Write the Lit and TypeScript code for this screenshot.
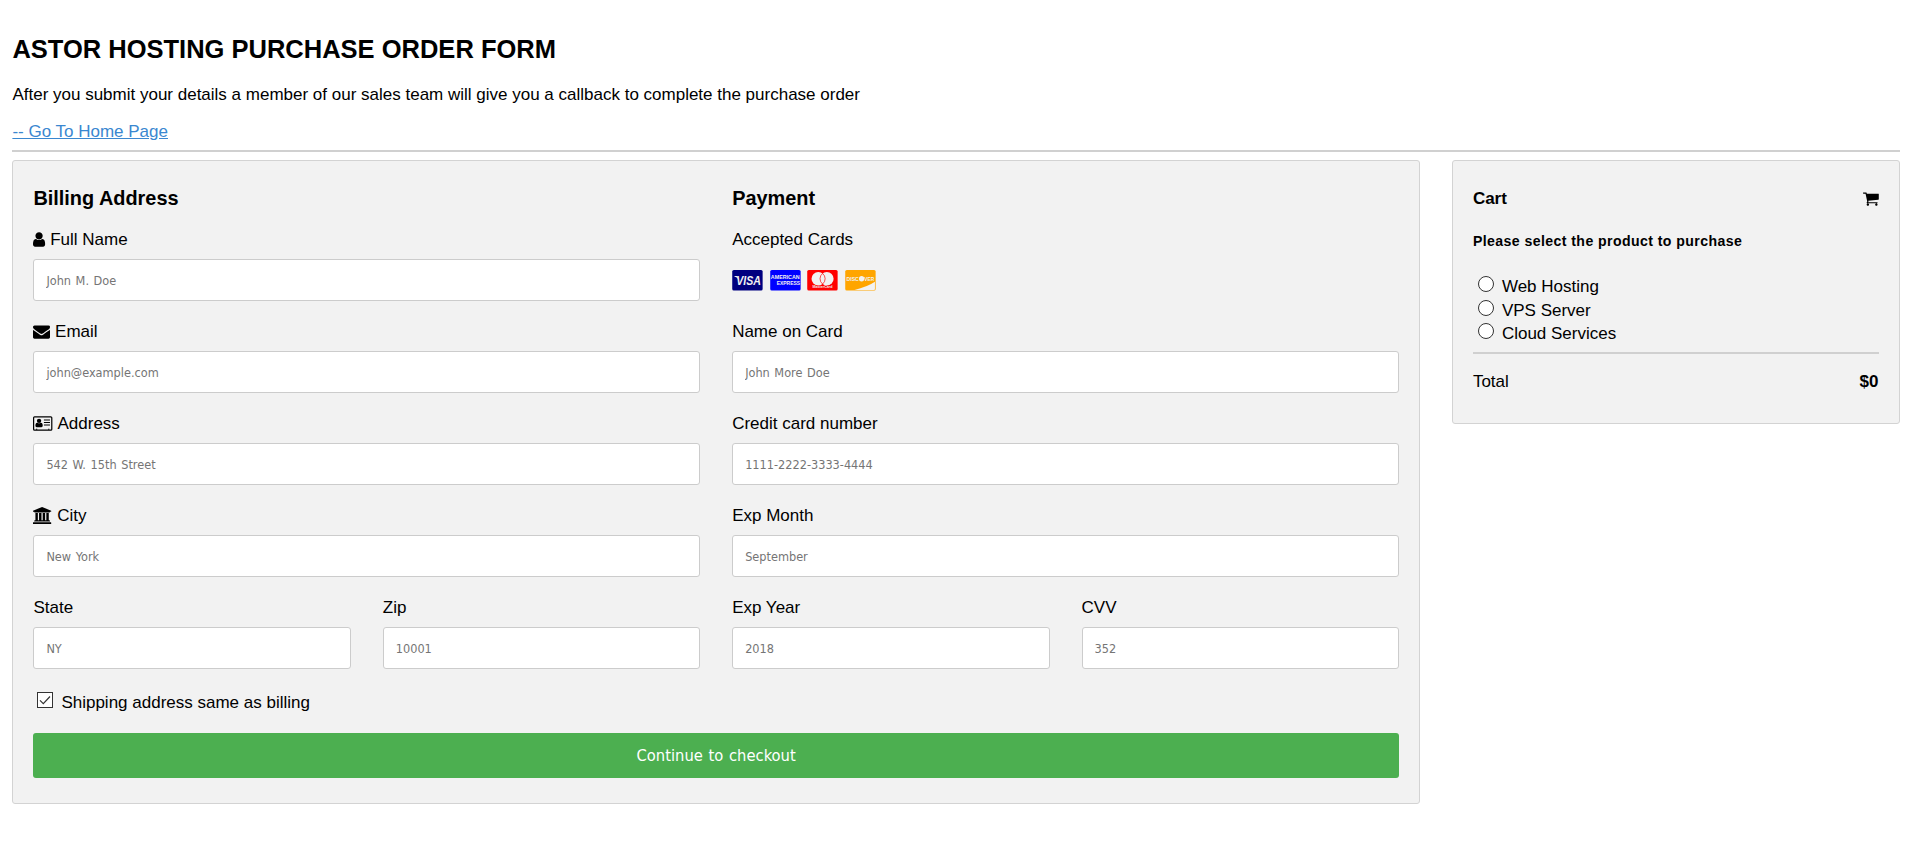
import { LitElement, html, svg, css } from "lit";
import { customElement } from "lit/decorators.js";

const icon = (cls: string, viewBox: string, body: unknown) =>
  html`<svg class="icon ${cls}" viewBox=${viewBox} aria-hidden="true">${body}</svg>`;

const userIcon = icon("user", "256 0 1280 1792", svg`<path d="M1536 1399q0 109-62.5 187t-150.5 78h-854q-88 0-150.5-78t-62.5-187q0-85 8.5-160.5t31.5-152 58.5-131 94-89 134.5-34.5q131 128 313 128t313-128q76 0 134.5 34.5t94 89 58.5 131 31.5 152 8.5 160.5zm-256-887q0 159-112.5 271.5t-271.5 112.5-271.5-112.5-112.5-271.5 112.5-271.5 271.5-112.5 271.5 112.5 112.5 271.5z"/>`);

const envelopeIcon = icon("envelope", "0 0 1792 1792", svg`<path d="M1792 710v794q0 66-47 113t-113 47h-1472q-66 0-113-47t-47-113v-794q44 49 101 87 362 246 497 345 57 42 92.5 65.5t94.5 48 110 24.5h2q51 0 110-24.5t94.5-48 92.5-65.5q170-123 498-345 57-39 100-87zm0-294q0 79-49 151t-122 123q-376 261-468 325-10 7-42.5 31t-54 38.5-52 32.5-57.5 27-50 9h-2q-23 0-50-9t-57.5-27-52-32.5-54-38.5-42.5-31q-91-64-262-182.5t-205-142.5q-62-42-117-115.5t-55-136.5q0-78 41.5-130t118.5-52h1472q65 0 112.5 47t47.5 113z"/>`);

const addressIcon = icon("address", "0 0 2048 1792", svg`
  <rect x="64" y="192" width="1920" height="1408" rx="100" fill="none" stroke="#000" stroke-width="128"/>
  <path d="M1024 1131q0-64-9-117.5t-29.5-103-60.5-78-97-28.5q-6 4-30 18t-37.5 21.5-35.5 17.5-43 14.5-42 4.500-42-4.500-43-14.500-35.500-17.500-37.500-21.500-30-18q-57 0-97 28.500t-60.500 78-29.500 103-9 117.500 37 106.500 91 42.500h512q54 0 91-42.500t37-106.500z"/>
  <circle cx="640" cy="614" r="230"/>
  <path d="M1152 480h640v112h-640zM1152 736h640v112h-640zM1152 992h640v112h-640zM320 1450h128v100h-128zM1600 1450h128v100h-128z"/>`);

const bankIcon = icon("bank", "0 0 1920 1792", svg`<path d="M960 0l960 384v128h-128q0 26-20.500 45t-48.500 19h-1526q-28 0-48.500-19t-20.500-45h-128v-128zM256 640h256v768h128v-768h256v768h128v-768h256v768h128v-768h256v768h59q28 0 48.500 19t20.500 45v64h-1664v-64q0-26 20.500-45t48.500-19h59zM1851 1600q28 0 48.500 19t20.500 45v128h-1920v-128q0-26 20.500-45t48.500-19z"/>`);

const cartIcon = icon("cart", "64 0 1664 1792", svg`<path d="M704 1536q0 52-38 90t-90 38-90-38-38-90 38-90 90-38 90 38 38 90zm896 0q0 52-38 90t-90 38-90-38-38-90 38-90 90-38 90 38 38 90zm128-1088v512q0 24-16.500 42.500t-40.500 21.500l-1044 122q13 60 13 70 0 16-24 64h920q26 0 45 19t19 45-19 45-45 19h-1024q-26 0-45-19t-19-45q0-11 8-31.500t16-36 21.500-40 15.500-29.500l-177-823h-204q-26 0-45-19t-19-45 19-45 45-19h256q16 0 28.500 6.500t19.500 15.500 13 24.500 8 26 5.500 29.500 4.500 26h1201q26 0 45 19t19 45z"/>`);

const cards = html`
  <svg class="card" viewBox="0 0 31 21" role="img" aria-label="Visa">
    <rect width="31" height="21" rx="1.600" fill="navy"/>
    <path d="M2.200 6.200h3l1.200 3.400Q4.800 7.300 2.200 6.700z" fill="#f2f2f2"/>
    <text class="visa" x="4" y="15.200" textLength="25.200" lengthAdjust="spacingAndGlyphs">VISA</text>
  </svg>
  <svg class="card" viewBox="0 0 31 21" role="img" aria-label="American Express">
    <rect width="31" height="21" rx="1.600" fill="blue"/>
    <text class="amex" x=".6" y="9.600" textLength="29.400" lengthAdjust="spacingAndGlyphs">AMERICAN</text>
    <text class="amex" x="6.600" y="15.600" textLength="23.900" lengthAdjust="spacingAndGlyphs">EXPRESS</text>
  </svg>
  <svg class="card" viewBox="0 0 31 21" role="img" aria-label="Mastercard">
    <rect width="31" height="21" rx="1.600" fill="red"/>
    <circle cx="11.300" cy="8.900" r="6.900" fill="#f2f2f2"/>
    <circle cx="20" cy="8.900" r="6.900" fill="#f2f2f2"/>
    <path d="M15.650 3.500a6.900 6.900 0 0 1 0 10.800a6.900 6.900 0 0 1 0-10.800z" fill="none" stroke="red" stroke-width=".7"/>
    <text class="master" x="5.300" y="18.800" textLength="20.500" lengthAdjust="spacingAndGlyphs">MasterCard</text>
  </svg>
  <svg class="card" viewBox="0 0 31 21" role="img" aria-label="Discover">
    <rect width="31" height="21" rx="1.600" fill="orange"/>
    <path d="M30.300 12v7.400q0 .9-.9.900H9.500Q22 17.500 30.300 12z" fill="#f2f2f2"/>
    <text class="discover" x="1.300" y="11" textLength="12.600" lengthAdjust="spacingAndGlyphs">DISC</text>
    <circle cx="16.700" cy="8.900" r="2.700" fill="#f2f2f2"/>
    <text class="discover" x="19.500" y="11" textLength="10" lengthAdjust="spacingAndGlyphs">VER</text>
  </svg>`;

const field = (label: string, placeholder: string, glyph: unknown = null) => html`
  <div class="field">
    <label>${glyph}<span>${label}</span></label>
    <input type="text" placeholder=${placeholder} />
  </div>`;

@customElement("app-root")
export class AppRoot extends LitElement {
  static styles = css`
    :host { display: block; box-sizing: border-box; padding: 35px 7.5px 0 12.4px; color: #000;
      font: 17px/20px "Liberation Sans", Arial, sans-serif; }
    * { box-sizing: border-box; }
    h2, h3, h4, h5, p { margin: 0; }
    h2 { font-size: 25.5px; line-height: 29px; }
    p { margin-top: 21px; }
    .home { display: block; width: max-content; margin-top: 17px; color: #3a87d0; text-decoration: underline; }
    .rule { height: 2px; background: #d0d0d0; }
    .top { margin: 8px 0 8px; }
    .layout { display: grid; grid-template-columns: 1407.5px 1fr; gap: 32px; align-items: start; }
    .panel { background: #f2f2f2; border: 1px solid lightgrey; border-radius: 3px; padding: 26px 20px 0; }
    .form { padding-bottom: 25px; }
    .cols { display: grid; grid-template-columns: 1fr 1fr; column-gap: 32px; }
    h3 { font-size: 19.9px; line-height: 23px; margin-bottom: 20px; }
    label { display: flex; height: 20px; margin-bottom: 9px; gap: 4.7px; white-space: nowrap; }
    .icon { display: block; height: 17px; margin-top: 1.4px; flex: none; overflow: visible; }
    .user { width: 12.14px; }
    .envelope { width: 17px; }
    .address { width: 19.4px; }
    .bank { width: 18.2px; margin-right: 1px; }
    .cart { width: 15.8px; }
    input[type="text"] { display: block; width: 100%; height: 42px; margin: 0 0 21px; padding: 12px; border: 1px solid #ccc;
      border-radius: 3px; background: #fff; font: 12.6px/16px "DejaVu Sans Condensed", "Noto Sans", sans-serif; word-spacing: 1px; }
    input::placeholder { color: #757575; opacity: 1; }
    .cards { display: flex; gap: 6.6px; height: 42px; margin-bottom: 21px; padding-top: 11px; }
    .card { display: block; width: 30.86px; height: 20.6px; overflow: visible; }
    .card text { fill: #f2f2f2; font-family: "Liberation Sans", Arial, sans-serif; font-weight: bold; }
    .visa { font-size: 12.4px; font-style: italic; }
    .amex { font-size: 6.2px; }
    .master { font-size: 3.4px; }
    .discover { font-size: 5.8px; }
    .ship { height: 24px; gap: 8px; margin: 0; padding-left: 4px; line-height: 26px; align-items: flex-start; }
    .check { appearance: none; width: 16px; height: 16px; margin: 2px 0 0; border: 1px solid #333; background: #fff; }
    .checkwrap { display: grid; }
    .checkwrap > * { grid-area: 1 / 1; }
    .tick { width: 16px; height: 16px; margin-top: 2px; fill: none; stroke: #333; stroke-width: 1.2; z-index: 1; }
    button { display: block; width: 100%; height: 45px; margin-top: 19px; padding: 1px 0 0; border: 0; border-radius: 3px; background: #4caf50; color: #fff;
      font: 16.4px/44px "DejaVu Sans Condensed", "Noto Sans", sans-serif; word-spacing: 1px; }
    .side { padding-top: 28px; padding-bottom: 31px; }
    .between { display: flex; justify-content: space-between; }
    h4 { font-size: 17px; }
    h5 { font-size: 14.1px; line-height: 16px; margin: 24px 0 26px; letter-spacing: 0.42px; }
    .option { display: flex; height: 23.6px; line-height: 23.6px; margin: 0; gap: 8px; padding-left: 5px; }
    .radio { appearance: none; width: 16px; height: 16px; margin: 1.2px 0 0; border: 1px solid #333; border-radius: 50%; background: #fff; }
    .sum { margin: 6px 0 18px; }
  `;

  render() {
    return html`
      <h2>ASTOR HOSTING PURCHASE ORDER FORM</h2>
      <p>After you submit your details a member of our sales team will give you a callback to complete the purchase order</p>
      <a class="home" href="#">-- Go To Home Page</a>
      <div class="rule top"></div>
      <div class="layout">
        <div class="panel form">
          <div class="cols">
            <div>
              <h3>Billing Address</h3>
              ${field("Full Name", "John M. Doe", userIcon)}
              ${field("Email", "john@example.com", envelopeIcon)}
              ${field("Address", "542 W. 15th Street", addressIcon)}
              ${field("City", "New York", bankIcon)}
              <div class="cols">${field("State", "NY")}${field("Zip", "10001")}</div>
            </div>
            <div>
              <h3>Payment</h3>
              <label>Accepted Cards</label>
              <div class="cards">${cards}</div>
              ${field("Name on Card", "John More Doe")}
              ${field("Credit card number", "1111-2222-3333-4444")}
              ${field("Exp Month", "September")}
              <div class="cols">${field("Exp Year", "2018")}${field("CVV", "352")}</div>
            </div>
          </div>
          <label class="ship">
            <span class="checkwrap"><input class="check" type="checkbox" checked />
              <svg class="tick" viewBox="0 0 16 16"><path d="M3 8.300l3.300 3.300L13 4.500"/></svg></span>
            <span>Shipping address same as billing</span>
          </label>
          <button>Continue to checkout</button>
        </div>
        <div class="panel side">
          <h4 class="between"><span>Cart</span>${cartIcon}</h4>
          <h5>Please select the product to purchase</h5>
          ${["Web Hosting", "VPS Server", "Cloud Services"].map(
            (name) => html`<label class="option"><input class="radio" type="radio" name="product" /><span>${name}</span></label>`
          )}
          <div class="rule sum"></div>
          <div class="between"><span>Total</span><b>$0</b></div>
        </div>
      </div>`;
  }
}
